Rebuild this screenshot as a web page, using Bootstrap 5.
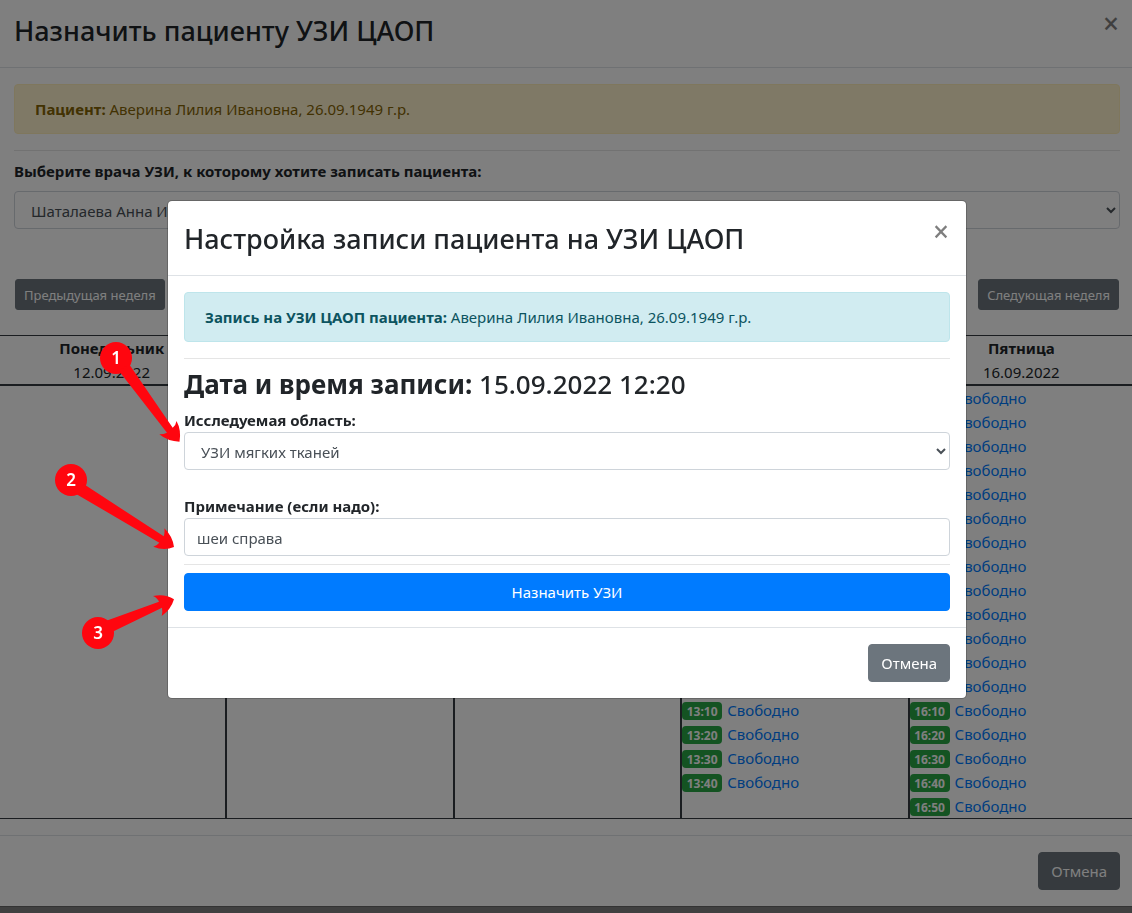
<!DOCTYPE html>
<html lang="ru">
<head>
<meta charset="utf-8">
<meta name="viewport" content="width=device-width, initial-scale=1">
<title>Назначить пациенту УЗИ ЦАОП</title>
<link rel="stylesheet" href="https://cdn.jsdelivr.net/npm/bootstrap@5.3.0/dist/css/bootstrap.min.css">
<style>
  body { font: 400 15px/24px "Noto Sans", sans-serif; color: #212529; background: #808080; }
  .week-panel { background: #fff; border-bottom: 1px solid #666; overflow: hidden; }
  .panel-head { padding: 10px 16px 15px 14px; border-bottom: 1px solid #dee2e6; }
  .panel-body { padding: 16px 12px 16px 14px; }
  .panel-foot { padding: 16px 12px 16px 14px; border-top: 1px solid #dee2e6; }
  .dlg-title { font-size: 27px; line-height: 42px; font-weight: 500; margin: 0; }
  .x-close { border: 0; background: none; padding: 0; width: 16px; font-size: 28px; line-height: 24px; font-weight: 500; color: #000; opacity: .5; }
  .panel-head .x-close { margin: 1px -3px 0 0; }
  .modal-header .x-close { margin: 1px 1px 0 0; }
  .alert { padding: 12px 20px; border-radius: 4px; margin-bottom: 16px; }
  .alert-warning { background: #fff3cd; border-color: #ffeeba; color: #856404; }
  .alert-info { background: #d1ecf1; border-color: #bee5eb; color: #0c5460; }
  hr { margin: 0 0 8px; border-color: rgba(0,0,0,.1); color: rgba(0,0,0,.1); opacity: 1; }
  label { font-weight: 700; display: block; }
  .form-control { font-size: 15px; line-height: 24px; height: 38px; padding: 7px 12px 5px; color: #495057; border-color: #ced4da; border-radius: 4px; }
  select.form-control { appearance: auto; }
  .btn { --bs-btn-font-size: 15px; --bs-btn-line-height: 24px; --bs-btn-border-radius: 4px; }
  .btn-sm { --bs-btn-font-size: 13px; --bs-btn-line-height: 21px; --bs-btn-border-radius: 3px; padding: 5px 8px 3px; }
  .btn-primary { --bs-btn-bg: #007bff; --bs-btn-border-color: #007bff; }
  .btn-secondary { --bs-btn-bg: #6c757d; --bs-btn-border-color: #6c757d; }
  .week-nav { margin: 50px 1px 25px; }
  .week-wrap { margin: 0 -15px 0 -16px; }
  .week { width: 100%; table-layout: fixed; border-collapse: separate; border-spacing: 0; border-top: 1px solid #343a40; border-bottom: 1px solid #343a40; }
  .week th { text-align: center; padding: 0; border-bottom: 2px solid #343a40; }
  .week th span { display: block; font-weight: 400; }
  .week td { padding: 0; vertical-align: top; border-left: 2px solid #343a40; }
  .week td:first-child { border-left: 0; }
  .slot { display: flex; align-items: center; gap: 5px; height: 24px; }
  .slot a { color: #007bff; text-decoration: none; }
  .slot .badge { width: 40px; height: 18px; margin-top: 2px; padding: 0; font-size: 12px; line-height: 19px; background: #28a745; border-radius: 4px; }
  #setup { padding-left: 2px; }
  #setup .modal-dialog { margin-top: 200px; }
  #setup .modal-content { border-radius: 5px; border-color: rgba(0,0,0,.2); }
  #setup .modal-header { padding: 17px 16px 15px; border-color: #dee2e6; }
  #setup .modal-footer { border-color: #dee2e6; padding: 16px; }
  #setup .modal-footer .btn { margin: 0; }
  .when { font-size: 26px; line-height: 33px; font-weight: 500; margin: 9px 0 7px; }
  .steps { position: absolute; left: -113px; top: 140px; z-index: 2; pointer-events: none; }
  .steps text { font: 600 17px "Noto Sans", sans-serif; fill: #fff; text-anchor: middle; }
</style>
</head>
<body>
<main class="week-panel">
  <header class="panel-head d-flex justify-content-between align-items-start">
    <h1 class="dlg-title">Назначить пациенту УЗИ ЦАОП</h1>
    <button type="button" class="x-close" aria-label="Закрыть">×</button>
  </header>
  <div class="panel-body">
    <div class="alert alert-warning"><b>Пациент:</b> Аверина Лилия Ивановна, 26.09.1949 г.р.</div>
    <hr>
    <label for="doctor" class="mb-2">Выберите врача УЗИ, к которому хотите записать пациента:</label>
    <select id="doctor" class="form-control"><option>Шаталаева Анна И</option></select>
    <div class="week-nav d-flex justify-content-between">
      <button type="button" class="btn btn-secondary btn-sm">Предыдущая неделя</button>
      <button type="button" class="btn btn-secondary btn-sm">Следующая неделя</button>
    </div>
    <div class="week-wrap">
      <table class="week">
        <thead><tr>
          <th>Понедельник<span>12.09.2022</span></th>
          <th>Вторник<span>13.09.2022</span></th>
          <th>Среда<span>14.09.2022</span></th>
          <th>Четверг<span>15.09.2022</span></th>
          <th>Пятница<span>16.09.2022</span></th>
        </tr></thead>
        <tbody><tr>
          <td></td><td></td><td></td>
          <td data-from="11:00" data-count="17"></td>
          <td data-from="14:00" data-count="18"></td>
        </tr></tbody>
      </table>
    </div>
  </div>
  <footer class="panel-foot d-flex justify-content-end">
    <button type="button" class="btn btn-secondary">Отмена</button>
  </footer>
</main>

<div class="modal-backdrop show"></div>
<div class="modal d-block" id="setup" role="dialog" aria-labelledby="setup-title">
  <div class="modal-dialog modal-lg">
    <div class="modal-content">
      <div class="modal-header align-items-start">
        <h2 class="dlg-title" id="setup-title">Настройка записи пациента на УЗИ ЦАОП</h2>
        <button type="button" class="x-close" aria-label="Закрыть">×</button>
      </div>
      <div class="modal-body">
        <div class="alert alert-info"><b>Запись на УЗИ ЦАОП пациента:</b> Аверина Лилия Ивановна, 26.09.1949 г.р.</div>
        <hr>
        <h3 class="when"><b>Дата и время записи:</b> 15.09.2022 12:20</h3>
        <label for="area">Исследуемая область:</label>
        <select id="area" class="form-control mb-4"><option>УЗИ мягких тканей</option></select>
        <label for="note">Примечание (если надо):</label>
        <input id="note" type="text" class="form-control mb-2" value="шеи справа">
        <hr>
        <button type="button" class="btn btn-primary w-100">Назначить УЗИ</button>
      </div>
      <div class="modal-footer">
        <button type="button" class="btn btn-secondary">Отмена</button>
      </div>
    </div>
    <svg class="steps" width="130" height="312" viewBox="54 340 130 312" fill="#ff060f" aria-hidden="true">
      <circle cx="116" cy="358" r="16"/>
      <path d="M119 371L167 432.700Q163 434.600 159.300 434.300Q168 441.500 179.500 441.700Q181.500 430 176.500 421Q176 425 172.700 427.700L129 364Z"/>
      <circle cx="71" cy="480" r="16"/>
      <path d="M74 492.700L159.300 542.700Q157 545.500 153.300 546.700Q164 551 174 547Q172.500 536 164.300 528.300Q165 533 163.700 536.300L84 484.300Z"/>
      <circle cx="98" cy="633" r="16"/>
      <path d="M105 621.300L159 601.700Q157.500 598 153 596Q165 593.500 174 599.300Q171 609.500 161.700 616Q162.800 611.500 162 607.700L111 632.500Z"/>
      <text x="116" y="364">1</text>
      <text x="71" y="486">2</text>
      <text x="98" y="639">3</text>
    </svg>
  </div>
</div>

<script src="https://cdn.jsdelivr.net/npm/bootstrap@5.3.0/dist/js/bootstrap.bundle.min.js"></script>
<script>
  // Free ten-minute slots for each day
  document.querySelectorAll('td[data-from]').forEach(function (cell) {
    var start = parseInt(cell.dataset.from, 10) * 60;
    for (var i = 0; i < +cell.dataset.count; i++) {
      var t = start + i * 10;
      var time = Math.floor(t / 60) + ':' + String(t % 60).padStart(2, '0');
      cell.insertAdjacentHTML('beforeend',
        '<div class="slot"><span class="badge">' + time + '</span><a href="#">Свободно</a></div>');
    }
  });
</script>
</body>
</html>
